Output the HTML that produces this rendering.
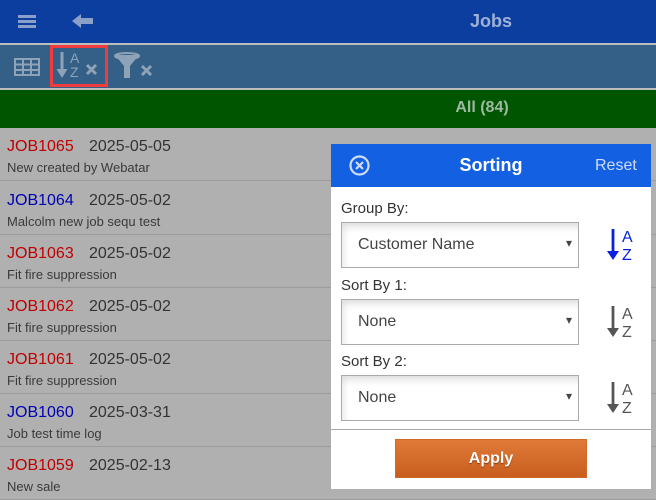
<!DOCTYPE html><html><head><style>
*{margin:0;padding:0;box-sizing:border-box}
body{width:656px;height:495px;overflow:hidden;background:#b0b0b0;font-family:"Liberation Sans",sans-serif;position:relative}
.abs{position:absolute}
.row{position:absolute;left:0;width:656px;height:53px;border-bottom:1px solid #9c9c9c}
.job{position:absolute;left:7px;top:10px;font-size:16px}
.date{position:absolute;left:89px;top:10px;font-size:16px;color:#333}
.desc{position:absolute;left:7px;top:32px;font-size:13px;color:#3a3a3a}
.lbl{position:absolute;left:10px;font-size:15px;color:#333}
.sel{position:absolute;left:10px;width:238px;height:46px;border:1px solid #aaa;background:linear-gradient(#f2f2f2,#fff 25%);box-shadow:inset 3px 3px 6px rgba(0,0,0,.08);font-size:16px;color:#444;padding:13px 0 0 16px}
.sel:after{content:"▾";position:absolute;right:6px;top:13px;font-size:12px;color:#444}
.az{position:absolute;left:274px;width:34px;height:38px}
</style></head><body>
<div class="abs" style="left:0;top:0;width:656px;height:43px;background:#0c3ea0"></div>
<div class="abs" style="left:18px;top:15px;width:18px;height:3px;background:#8aa0c8;box-shadow:0 5px 0 #8aa0c8,0 10px 0 #8aa0c8"></div>
<svg class="abs" style="left:72px;top:13px" width="22" height="16"><path d="M0 8 L9 1 V5 H21 V11 H9 V15 Z" fill="#8aa0c8"/></svg>
<div class="abs" style="left:0;top:11px;width:982px;text-align:center;font-size:18px;font-weight:bold;color:#9fb2d6">Jobs</div>
<div class="abs" style="left:0;top:43px;width:656px;height:2px;background:#bdbdbd"></div>
<div class="abs" style="left:0;top:45px;width:656px;height:43px;background:#345f86"></div>
<svg class="abs" style="left:14px;top:58px" width="26" height="18"><g fill="none" stroke="#8ea3b8" stroke-width="2"><rect x="1" y="1" width="24" height="16"/><path d="M1 6.5H25M1 12H25M9 1V17M17 1V17"/></g></svg>
<div class="abs" style="left:50px;top:45px;width:58px;height:42px;border:3px solid #f03c3c"></div>
<svg class="abs" style="left:56px;top:50px" width="46" height="30"><g fill="#8ea3b8" stroke="#8ea3b8"><path d="M6 2V22" stroke-width="3"/><path d="M0.5 19L6 28L11.5 19Z" stroke="none"/><text x="14" y="13" font-size="14" stroke="none" font-family="Liberation Sans">A</text><text x="14" y="27" font-size="14" stroke="none" font-family="Liberation Sans">Z</text><path d="M31 15L40 24M40 15L31 24" stroke-width="3"/></g></svg>
<svg class="abs" style="left:114px;top:52px" width="42" height="28"><g fill="#8ea3b8" stroke="#8ea3b8"><path d="M1 3H25L16 14V26H10V14Z" stroke="none"/><ellipse cx="13" cy="4" rx="12" ry="3" fill="none" stroke-width="2"/><path d="M28 14L37 23M37 14L28 23" stroke-width="3"/></g></svg>
<div class="abs" style="left:0;top:88px;width:656px;height:2px;background:#bdbdbd"></div>
<div class="abs" style="left:0;top:90px;width:656px;height:38px;background:#005600"></div>
<div class="abs" style="left:0;top:99px;width:964px;text-align:center;font-size:16px;font-weight:bold;color:#9fb89f">All (84)</div>
<div class="row" style="top:128px"><span class="job" style="color:#c00000">JOB1065</span><span class="date">2025-05-05</span><span class="desc">New created by Webatar</span></div>
<div class="row" style="top:182px"><span class="job" style="color:#0000b4">JOB1064</span><span class="date">2025-05-02</span><span class="desc">Malcolm new job sequ test</span></div>
<div class="row" style="top:235px"><span class="job" style="color:#c00000">JOB1063</span><span class="date">2025-05-02</span><span class="desc">Fit fire suppression</span></div>
<div class="row" style="top:288px"><span class="job" style="color:#c00000">JOB1062</span><span class="date">2025-05-02</span><span class="desc">Fit fire suppression</span></div>
<div class="row" style="top:341px"><span class="job" style="color:#c00000">JOB1061</span><span class="date">2025-05-02</span><span class="desc">Fit fire suppression</span></div>
<div class="row" style="top:394px"><span class="job" style="color:#0000b4">JOB1060</span><span class="date">2025-03-31</span><span class="desc">Job test time log</span></div>
<div class="row" style="top:447px"><span class="job" style="color:#c00000">JOB1059</span><span class="date">2025-02-13</span><span class="desc">New sale</span></div>
<div class="abs" style="left:331px;top:144px;width:320px;height:345px;background:#fff">
<div class="abs" style="left:0;top:0;width:320px;height:43px;background:#1360e3"></div>
<svg class="abs" style="left:18px;top:11px" width="21" height="21"><circle cx="10.5" cy="10.5" r="9" fill="none" stroke="#cfdcf7" stroke-width="2.2"/><path d="M7 7L14 14M14 7L7 14" stroke="#cfdcf7" stroke-width="2.2"/></svg>
<div class="abs" style="left:0;top:11px;width:320px;text-align:center;font-size:18px;font-weight:bold;color:#fff">Sorting</div>
<div class="abs" style="left:264px;top:13px;font-size:16px;color:#cfdcf7">Reset</div>
<div class="lbl" style="top:56px">Group By:</div>
<div class="sel" style="top:78px">Customer Name</div>
<div class="lbl" style="top:133px">Sort By 1:</div>
<div class="sel" style="top:155px">None</div>
<div class="lbl" style="top:209px">Sort By 2:</div>
<div class="sel" style="top:231px">None</div>
<svg class="az" style="top:83px"><g fill="#0a1fe0"><path d="M8 2V27" stroke="#0a1fe0" stroke-width="2.8"/><path d="M2 24L8 33L14 24Z"/><text x="17" y="15" font-size="16" font-family="Liberation Sans">A</text><text x="17" y="33" font-size="16" font-family="Liberation Sans">Z</text></g></svg>
<svg class="az" style="top:160px"><g fill="#555"><path d="M8 2V27" stroke="#555" stroke-width="2.8"/><path d="M2 24L8 33L14 24Z"/><text x="17" y="15" font-size="16" font-family="Liberation Sans">A</text><text x="17" y="33" font-size="16" font-family="Liberation Sans">Z</text></g></svg>
<svg class="az" style="top:236px"><g fill="#555"><path d="M8 2V27" stroke="#555" stroke-width="2.8"/><path d="M2 24L8 33L14 24Z"/><text x="17" y="15" font-size="16" font-family="Liberation Sans">A</text><text x="17" y="33" font-size="16" font-family="Liberation Sans">Z</text></g></svg>
<div class="abs" style="left:0;top:285px;width:320px;height:1px;background:#aaa"></div>
<div class="abs" style="left:64px;top:295px;width:192px;height:39px;background:linear-gradient(#e07a38,#c85e1e);border:1px solid #d06a2a;color:#fff;font-size:16px;font-weight:bold;text-align:center;line-height:37px;text-shadow:0 1px 1px #7a3a10">Apply</div>
</div>
</body></html>
